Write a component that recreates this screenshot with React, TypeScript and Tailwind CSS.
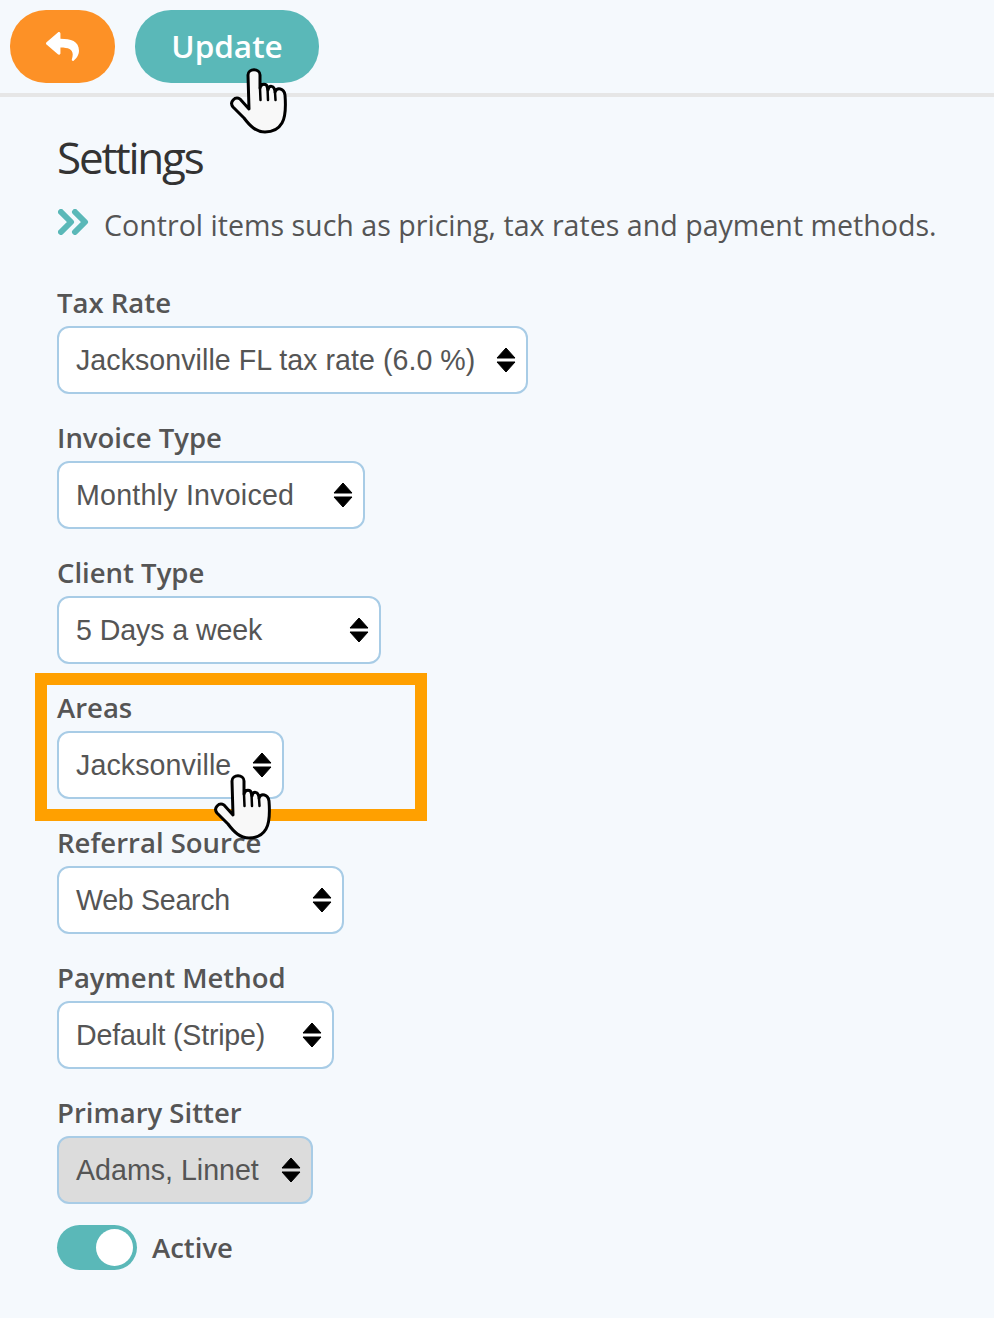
import { FaReply } from 'react-icons/fa';

const fields = [
  { label: 'Tax Rate', value: 'Jacksonville FL tax rate (6.0 %)', width: 'w-[471px]', spacing: 'tracking-[0.05px]' },
  { label: 'Invoice Type', value: 'Monthly Invoiced', width: 'w-[308px]', spacing: 'tracking-[0.23px]' },
  { label: 'Client Type', value: '5 Days a week', width: 'w-[324px]', spacing: 'tracking-[-0.1px]' },
  { label: 'Areas', value: 'Jacksonville', width: 'w-[227px]', spacing: 'tracking-[0.1px]' },
  { label: 'Referral Source', value: 'Web Search', width: 'w-[287px]', spacing: 'tracking-[-0.3px]' },
  { label: 'Payment Method', value: 'Default (Stripe)', width: 'w-[277px]', spacing: 'tracking-[-0.2px]' },
  { label: 'Primary Sitter', value: 'Adams, Linnet', width: 'w-[256px]', disabled: true, spacing: 'tracking-[0px]' },
];

// select arrows, same look as the native one
const Arrows = () => (
  <svg width="20" height="26" viewBox="0 0 20 26" className="absolute right-[10px] top-[19px]">
    <path d="M10 1 L19 11 H1 Z M1 15 H19 L10 25 Z" fill="#000" stroke="#000" strokeLinejoin="round" strokeWidth="1" />
  </svg>
);

const Hand = ({ className }: { className: string }) => (
  <svg viewBox="0 0 57 66" className={className}>
    <path
      d="M18 7 C18 0 30 0 30 7 L30 20 C31 15 37 15 37.500 20 L38 22 C39 17 44 17 45 23 L45 24 C47 19 54 20 55 27 C56 40 55 50 52 55 C48 62 42 64 35 64 C26 64 20 58 14 50 L3 39 C-1 34 5 28 10 31 L19 41 Z"
      fill="#f8f8f8"
      stroke="#000"
      strokeWidth="3"
      strokeLinejoin="round"
    />
    <path d="M30 20 L30.500 32 M37.500 20 L38 32 M45 24 L45.500 32" stroke="#000" strokeWidth="2.500" strokeLinecap="round" fill="none" />
  </svg>
);

export default function App() {
  return (
    <div className="relative h-[1318px] w-[994px] overflow-hidden bg-[#f5f9fd] font-['Open_Sans',sans-serif]">
      <div className="flex h-[97px] gap-5 border-b-4 border-[#e6e6e6] pl-[10px] pt-[10px]">
        <button className="flex h-[73px] w-[105px] items-center justify-center rounded-[36px] bg-[#fd9126] text-white">
          <FaReply size={33} />
        </button>
        <button className="h-[73px] w-[184px] rounded-[36px] bg-[#5ab8b8] pb-[2px] text-[31.500px] font-semibold text-white">
          Update
        </button>
      </div>

      <div className="pl-[57px]">
        <h1 className="mt-[30px] text-[44px] leading-[60px] tracking-[-2.200px] text-[#333]">Settings</h1>
        <p className="mt-[16px] flex h-[44px] items-center text-[28.600px] text-[#555]">
          <svg width="32" height="26" viewBox="0 0 32 26" className="mb-[6px] ml-[1px] mr-[14px]">
            <path d="M3 3 L13 13 L3 23 M17 3 L27 13 L17 23" fill="none" stroke="#5ab8b8" strokeWidth="6" strokeLinejoin="round" strokeLinecap="round" />
          </svg>
          Control items such as pricing, tax rates and payment methods.
        </p>

        <div className="mt-[38px] flex flex-col gap-[26px]">
          {fields.map((f) => (
            <div key={f.label}>
              <label className="block h-[41px] text-[27.500px] font-semibold leading-[36px] text-[#555]">{f.label}</label>
              <div
                className={`relative flex h-[68px] items-center rounded-[12px] border-2 border-[#a8cce6] pl-[17px] font-['Liberation_Sans',sans-serif] text-[28.600px] text-[#555] ${f.width} ${f.spacing} ${f.disabled ? 'bg-[#dcdcdc]' : 'bg-white'}`}
              >
                {f.value}
                <Arrows />
              </div>
            </div>
          ))}
        </div>

        <div className="mt-[21px] flex items-center gap-[15px]">
          <div className="flex h-[45px] w-[80px] items-center justify-end rounded-full bg-[#5ab8b8] pr-[4px]">
            <div className="h-[37px] w-[37px] rounded-full bg-white" />
          </div>
          <span className="text-[27.500px] font-semibold text-[#555]">Active</span>
        </div>
      </div>

      {/* callout box and cursors sit over the form */}
      <div className="absolute left-[35px] top-[673px] h-[148px] w-[392px] border-[12px] border-[#ffa000]" />
      <Hand className="absolute left-[230px] top-[68px] h-[66px] w-[57px]" />
      <Hand className="absolute left-[214px] top-[774px] h-[66px] w-[57px]" />
    </div>
  );
}
